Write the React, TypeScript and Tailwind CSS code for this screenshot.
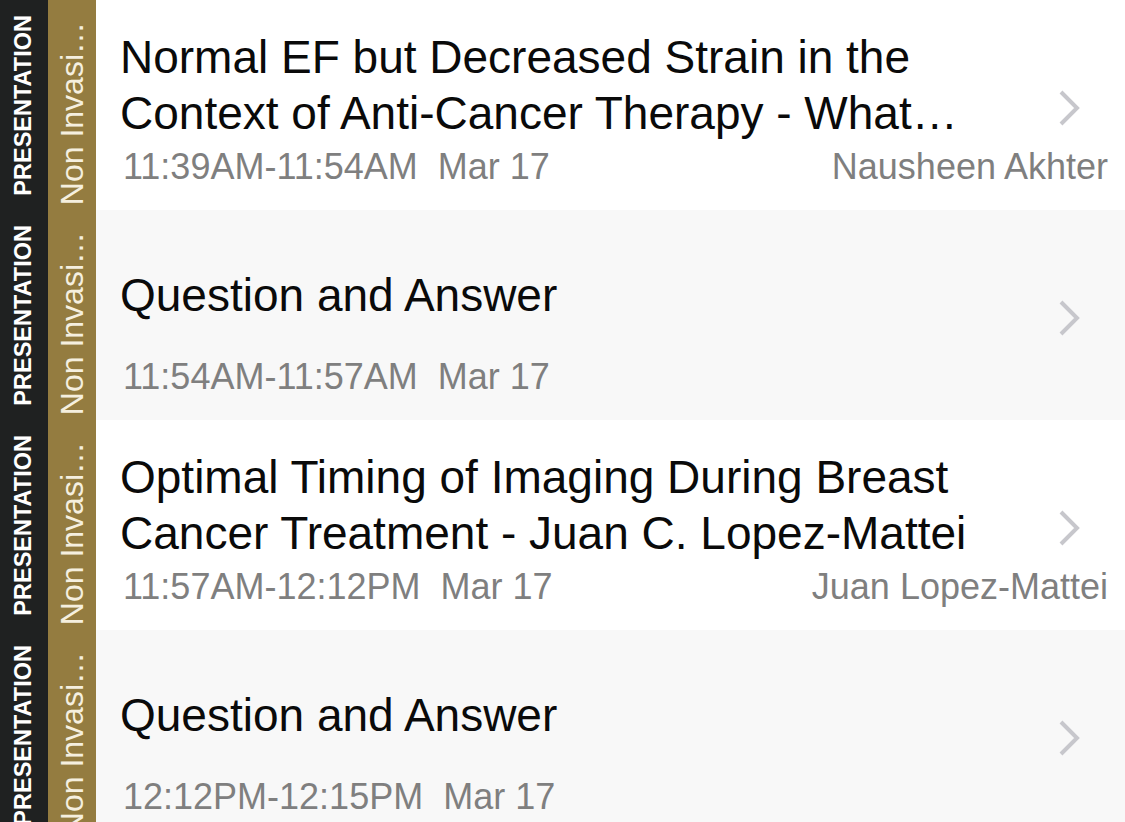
import React from 'react';

interface Session {
  title: string;
  time: string;
  speaker?: string;
}

const SESSIONS: Session[] = [
  {
    title: 'Normal EF but Decreased Strain in the Context of Anti-Cancer Therapy - What…',
    time: '11:39AM-11:54AM  Mar 17',
    speaker: 'Nausheen Akhter',
  },
  {
    title: 'Question and Answer',
    time: '11:54AM-11:57AM  Mar 17',
  },
  {
    title: 'Optimal Timing of Imaging During Breast Cancer Treatment - Juan C. Lopez-Mattei',
    time: '11:57AM-12:12PM  Mar 17',
    speaker: 'Juan Lopez-Mattei',
  },
  {
    title: 'Question and Answer',
    time: '12:12PM-12:15PM  Mar 17',
  },
];

function Chevron() {
  return (
    <svg width="24" height="38" viewBox="0 0 24 38" fill="none">
      <path d="M4 3 L20 19 L4 35" stroke="#c7c7cc" strokeWidth="4" />
    </svg>
  );
}

function SessionRow({ session, shaded }: { session: Session; shaded: boolean }) {
  return (
    <div className="flex h-[210px] shrink-0">
      {/* session type strip */}
      <div className="flex w-12 items-center justify-center bg-[#1f2121]">
        <span className="rotate-180 whitespace-nowrap text-[23.5px] font-bold leading-none text-white [writing-mode:vertical-rl]">
          PRESENTATION
        </span>
      </div>

      {/* track strip */}
      <div className="flex w-12 flex-col items-center justify-end bg-[#947c40] pb-[5px]">
        <span className="rotate-180 whitespace-nowrap text-[32px] leading-none text-[#f5efdf] [writing-mode:vertical-rl]">
          Non Invasi…
        </span>
      </div>

      <div className={`flex flex-1 flex-col pl-6 pr-[17px] pt-[29px] ${shaded ? 'bg-[#f8f8f8]' : 'bg-white'}`}>
        <div className="flex">
          <div className="flex h-[112px] w-[880px] items-center">
            <p className="text-[46px] leading-[56px] text-[#0a0a0a]">{session.title}</p>
          </div>
          <div className="flex flex-1 justify-end pr-[27px] pt-[60px]">
            <div className="h-[38px]">
              <Chevron />
            </div>
          </div>
        </div>
        <div className="mt-[6px] flex justify-between whitespace-pre pl-[3px] text-[36px] leading-10 text-[#7f7f7f]">
          <span>{session.time}</span>
          {session.speaker && <span>{session.speaker}</span>}
        </div>
      </div>
    </div>
  );
}

export default function App() {
  return (
    <div className="flex h-[822px] w-[1125px] flex-col overflow-hidden bg-white font-['Liberation_Sans',Arial,sans-serif]">
      {SESSIONS.map((s, i) => (
        <SessionRow key={i} session={s} shaded={i % 2 === 1} />
      ))}
    </div>
  );
}
